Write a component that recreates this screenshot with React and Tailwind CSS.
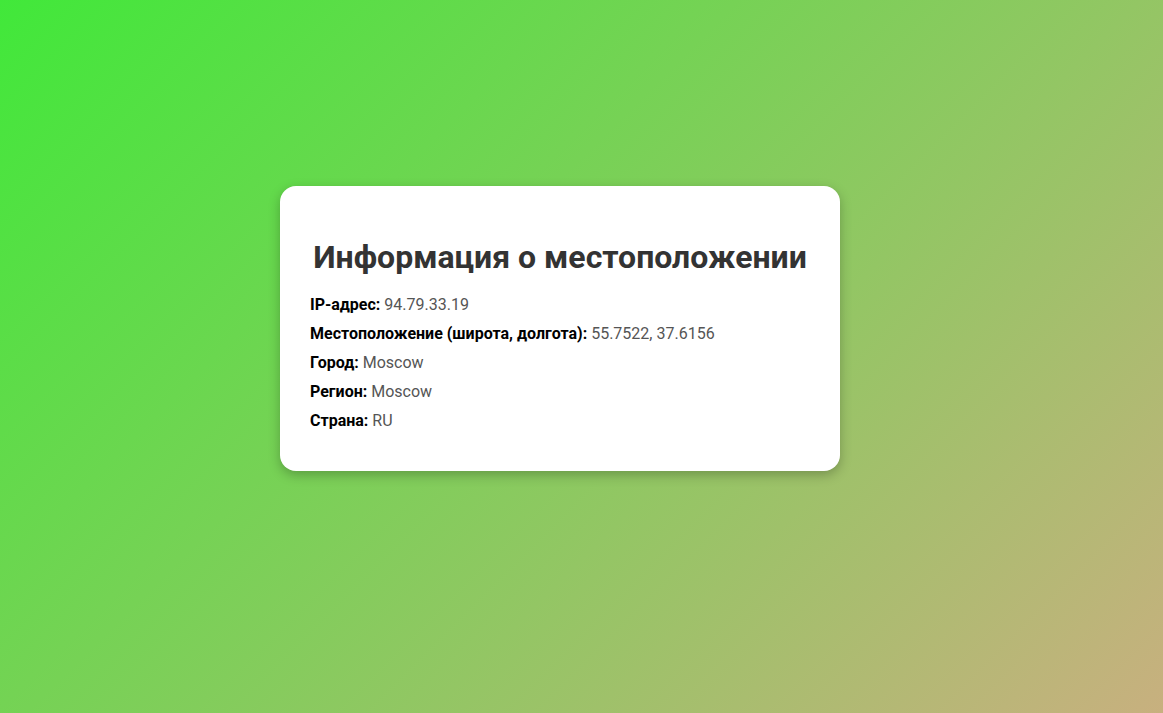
const INFO = [
  { label: 'IP-адрес:', value: '94.79.33.19' },
  { label: 'Местоположение (широта, долгота):', value: '55.7522, 37.6156' },
  { label: 'Город:', value: 'Moscow' },
  { label: 'Регион:', value: 'Moscow' },
  { label: 'Страна:', value: 'RU' },
]

export default function App() {
  return (
    <div
      className="h-[713px] flex items-center justify-center pr-[43px] pb-[57px] bg-[linear-gradient(135deg,#41e83a,#c8b07f)]"
      style={{ fontFamily: 'Roboto, "Noto Sans", sans-serif' }}
    >
      <div className="w-[560px] bg-white rounded-2xl px-[30px] pt-[30px] pb-[36px] shadow-[0_4px_12px_rgba(0,0,0,0.25)]">
        <h1 className="text-[32px] font-bold text-[#333] text-center leading-[38px] mt-[22px] mb-[14px]">
          Информация о местоположении
        </h1>
        <div className="flex flex-col">
          {INFO.map(item => (
            <p key={item.label} className="text-base leading-[21px] my-[4px] text-[#555]">
              <strong className="font-bold text-black">{item.label}</strong> {item.value}
            </p>
          ))}
        </div>
      </div>
    </div>
  )
}
